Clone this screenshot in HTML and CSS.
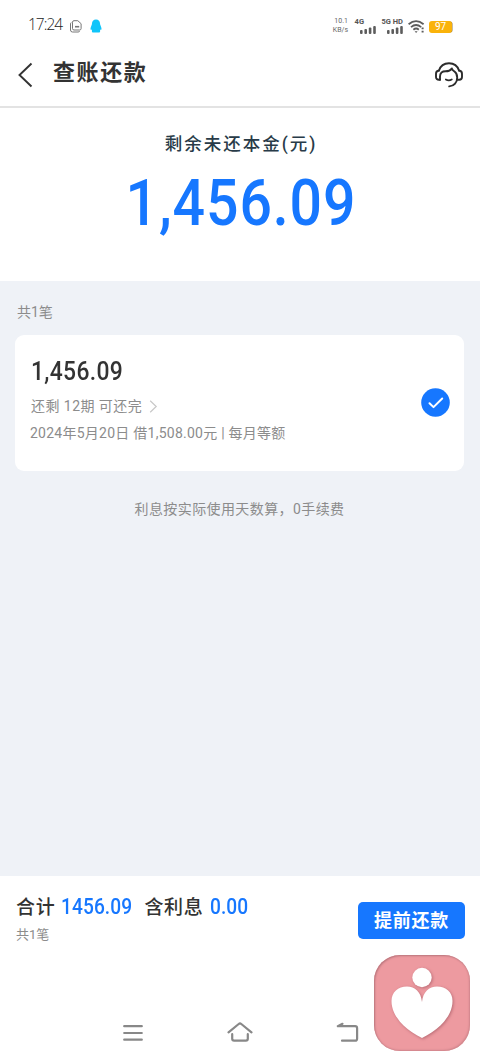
FILE: index.html
```html
<!DOCTYPE html>
<html lang="zh-CN">
<head>
<meta charset="utf-8">
<title>查账还款</title>
<link rel="stylesheet" href="styles.css">
</head>
<body>
<div class="screen">
  <div class="status">
    <span class="clock">17:24</span>
    <svg class="note-icon" width="12" height="13" viewBox="0 0 12 13" fill="none" stroke="#777" stroke-width="1"><path d="M4 .7h3.800l3.300 3v4.800q0 1.500-1.500 1.500H4q-1.500 0-1.500-1.500V2.200Q2.500.7 4 .7z"/><path d="M1.200 2.500Q.5 3 .5 4v6q0 2 2 2h5.500q1.300 0 1.800-.9"/><path d="M5 6.700h4.200" stroke-width="1.600"/></svg>
    <svg class="qq-icon" width="12" height="14" viewBox="0 0 12 14" fill="#10c5fa"><path d="M6 .4C3.400.4 2 2.200 2 4.500 2 6.200.5 8 .5 9.700c0 1.300.7 1.300 1.400.9v2q0 .9 1 .9h6.200q1 0 1-.9v-2c.7.4 1.400.4 1.400-.9C11.500 8 10 6.200 10 4.500 10 2.200 8.600.4 6 .4z"/></svg>
    <div class="status-right">
      <div class="speed"><span>10.1</span><span>KB/s</span></div>
      <div class="network net-4g"><b>4G</b><svg width="16" height="8" viewBox="0 0 16 8" fill="#5d5d5d"><rect y="4" width="2.600" height="4" rx="1"/><rect x="4.400" y="3" width="2.600" height="5" rx="1"/><rect x="8.800" y="1.500" width="2.600" height="6.500" rx="1"/><rect x="13.200" width="2.600" height="8" rx="1"/></svg></div>
      <div class="network net-5g"><b>5G HD</b><svg width="16" height="8" viewBox="0 0 16 8" fill="#5d5d5d"><rect y="4" width="2.600" height="4" rx="1"/><rect x="4.400" y="3" width="2.600" height="5" rx="1"/><rect x="8.800" y="1.500" width="2.600" height="6.500" rx="1"/><rect x="13.200" width="2.600" height="8" rx="1"/></svg></div>
      <svg class="wifi" width="17" height="13" viewBox="0 0 17 13" fill="none" stroke="#5d5d5d" stroke-width="1.800"><path d="M.6 4.300Q8 -2 15.600 4.300M3 7.100q5-4.200 10.200 0M5.400 9.700q2.700-2.300 5.400 0"/><path d="M6.600 11.300h3L8.100 13z" fill="#5d5d5d" stroke="none"/><path d="M14.600 7.500v1.800M14.600 10.700v1.800" stroke-width="2"/></svg>
      <div class="battery">97</div>
    </div>
  </div>

  <header class="header">
    <svg class="back" width="16" height="26" viewBox="0 0 16 26" fill="none" stroke="#333" stroke-width="1.900"><path d="M13.500 1.500 1.500 13l12 11.500"/></svg>
    <h1 class="title">查账还款</h1>
    <svg class="service" width="28" height="26" viewBox="0 0 28 26" fill="none" stroke="#2c2c2c" stroke-width="1.900" stroke-linecap="round" stroke-linejoin="round"><path d="M4 8.500C5.400 4 9 1.200 14 1.200S22.600 4 24 8.500"/><path d="M5 17.700H3.800C2.200 17.700 1 16.600 1 15v-3.200c0-1.800 1.300-3.100 3-3.300"/><path d="M5 17.700v-3.200c0-3.600 2.200-5.200 5.600-5.200 3 0 5-.9 6.200-2.900.4 1.500 1.500 2.300 2.700 3.200 1.800 1.300 2.700 3 2.700 5.800 0 5-3 8.900-8 9"/><path d="M24 8.500c1.700.2 3 1.500 3 3.300V15c0 1.600-1.200 2.700-2.800 2.700h-2"/><path d="M10.800 17.500q2.900 1.700 6 0" stroke-width="1.700"/></svg>
  </header>

  <section class="summary">
    <div class="summary-label">剩余未还本金(元)</div>
    <div class="summary-amount">1,456.09</div>
  </section>

  <main class="content">
    <div class="count">共1笔</div>
    <div class="card">
      <div class="loan">
        <div class="loan-amount">1,456.09</div>
        <div class="loan-terms"><span>还剩 12期 可还完</span><svg width="9" height="13" viewBox="0 0 9 13" fill="none" stroke="#c8c8c8" stroke-width="1.200"><path d="m1.200.8 6 5.700-6 5.700"/></svg></div>
        <div class="loan-detail">2024年5月20日 借1,508.00元 | 每月等额</div>
      </div>
      <svg class="check" width="29" height="29" viewBox="0 0 29 29"><circle cx="14.500" cy="14.500" r="14.300" fill="#1677ff"/><path d="m8.500 15.300 4 3.800 8.700-8.600" fill="none" stroke="#fff" stroke-width="2" stroke-linecap="round" stroke-linejoin="round"/></svg>
    </div>
    <p class="hint">利息按实际使用天数算，0手续费</p>
  </main>

  <footer class="footer">
    <div class="totals">
      <div class="total-line"><span class="total-name">合计</span><span class="total-num sum">1456.09</span><span class="total-name interest">含利息</span><span class="total-num">0.00</span></div>
      <div class="total-count">共1笔</div>
    </div>
    <button class="pay">提前还款</button>
  </footer>

  <nav class="nav">
    <svg width="20" height="18" viewBox="0 0 20 18" fill="none" stroke="#888" stroke-width="2.200" stroke-linecap="round"><path d="M1.200 2.200h17.600M1.200 9h17.600M1.200 15.700h17.600"/></svg>
    <svg class="home" width="26" height="20" viewBox="0 0 26 20" fill="none" stroke="#888" stroke-width="2.200" stroke-linecap="round" stroke-linejoin="round"><path d="M1.500 10.300 11.700 2q1.300-1 2.600 0l10.200 8.300"/><path d="M5.200 12.200v4.600q0 1.900 1.900 1.900h11.800q1.900 0 1.900-1.900v-4.600"/></svg>
    <svg class="return" width="23" height="20" viewBox="0 0 23 20" fill="none" stroke="#888" stroke-width="2.200" stroke-linecap="round" stroke-linejoin="round"><path d="M6.500 1.800 1.800 4.200h17.300q2 0 2 2v10.500q0 2-2 2H6"/></svg>
  </nav>

  <div class="floating">
    <svg width="96" height="96" viewBox="0 0 96 96"><g fill="#fff"><circle cx="48" cy="22.500" r="9.700"/><path d="M48 47C47 37 41 31.500 33 31.500 24 31.500 17.500 37 17.500 46c0 15 13.500 29 30.500 37C65 75 78.500 61 78.500 46c0-9-6.500-14.500-15.500-14.500C55 31.500 49 37 48 47z"/></g></svg>
  </div>
</div>
</body>
</html>
```
FILE: styles.css
```css
* { box-sizing: border-box; }
body { margin: 0; }
svg { display: block; flex: none; }
.screen {
  position: relative;
  display: flex;
  flex-direction: column;
  width: 480px;
  height: 1061px;
  overflow: hidden;
  background: #fff;
  color: #333;
  font-family: Roboto, "Noto Sans CJK SC", sans-serif;
  white-space: nowrap;
}
.status {
  display: flex;
  align-items: flex-start;
  height: 50px;
  padding: 15px 26px 0 28px;
}
.clock {
  width: 42px;
  font: 300 15.500px/18px "Open Sans", sans-serif;
  letter-spacing: -1px;
  color: #222;
}
.note-icon { margin-top: 5px; }
.qq-icon { margin: 4px 0 0 8px; }
.status-right { display: flex; margin-left: auto; }
.speed {
  display: flex;
  flex-direction: column;
  align-items: flex-end;
  width: 20px;
  padding-top: 2px;
  font-size: 7px;
  line-height: 9px;
  color: #666;
}
.network {
  display: flex;
  flex-direction: column;
  align-items: flex-end;
  gap: 1px;
  padding-top: 3px;
  color: #555;
}
.network b { font-size: 7.500px; line-height: 7px; }
.net-4g { width: 28px; }
.net-4g b { margin-right: 12px; }
.net-5g { width: 27px; }
.wifi { margin: 5px 0 0 5px; }
.battery {
  width: 23px;
  height: 12px;
  margin: 6px 2px 0 4px;
  border-radius: 3px;
  background: #fab30b;
  box-shadow: 1px 0 0 -0.500px #8a7650;
  color: #fff;
  font-size: 10px;
  line-height: 12px;
  text-align: center;
}
.header {
  display: flex;
  align-items: center;
  height: 58px;
  padding: 0 17px 8px 18px;
  border-bottom: 2px solid #e3e3e3;
}
.back { margin-top: 2px; }
.title {
  margin: -3px 0 0 19px;
  font-size: 22px;
  font-weight: 700;
  line-height: 30px;
  letter-spacing: 1.600px;
}
.service { margin: 2px 0 0 auto; }
.summary {
  display: flex;
  flex-direction: column;
  align-items: center;
  height: 173px;
  padding-top: 24px;
}
.summary-label {
  margin-left: 2px;
  font-size: 17.500px;
  font-weight: 500;
  line-height: 24px;
  letter-spacing: 2px;
  color: #283b48;
}
.summary-amount {
  margin-top: 15px;
  padding-left: 3px;
  font-size: 65px;
  font-weight: 500;
  line-height: 65px;
  letter-spacing: 1px;
  color: #1677ff;
  transform: scaleX(.88);
}
.content {
  flex: 1;
  padding: 20px 16px 0 15px;
  background: #eff2f7;
}
.count {
  height: 34px;
  padding-left: 2px;
  font-size: 14px;
  line-height: 22px;
  color: #8c8c8c;
}
.card {
  display: flex;
  justify-content: space-between;
  height: 136px;
  padding: 21px 14px 0 15px;
  border-radius: 9px;
  background: #fff;
}
.loan-amount {
  padding-left: 1px;
  font-size: 26px;
  font-weight: 500;
  line-height: 31px;
  letter-spacing: .4px;
  transform: scaleX(.88);
  transform-origin: left;
}
.loan-terms {
  display: flex;
  align-items: center;
  gap: 7px;
  margin-top: 6px;
  padding-left: 1px;
  font-size: 14px;
  line-height: 26px;
  letter-spacing: .45px;
  color: #8c8c8c;
}
.loan-detail {
  font-size: 14px;
  line-height: 28px;
  letter-spacing: .25px;
  color: #8c8c8c;
}
.check { margin-top: 32px; }
.hint {
  margin: 26px 0 0;
  font-size: 14px;
  line-height: 24px;
  letter-spacing: .4px;
  text-align: center;
  color: #8c8c8c;
}
.footer {
  display: flex;
  justify-content: space-between;
  height: 79px;
  padding: 16px 15px 0 16px;
}
.total-line {
  display: flex;
  align-items: baseline;
  height: 31px;
  line-height: 30px;
}
.total-name {
  font-size: 19px;
  font-weight: 500;
  letter-spacing: .7px;
}
.total-num {
  display: inline-block;
  margin-left: 6px;
  font-size: 22px;
  font-weight: 500;
  letter-spacing: .1px;
  color: #1677ff;
  transform: scaleX(.87);
  transform-origin: left;
}
.sum { width: 71px; }
.interest { margin-left: 12px; }
.total-count {
  font-size: 13px;
  line-height: 24px;
  color: #8c8c8c;
}
.pay {
  width: 107px;
  height: 37px;
  margin-top: 10px;
  padding: 0 0 3px;
  border: 0;
  border-radius: 5px;
  background: #1677ff;
  color: #fff;
  font-family: inherit;
  font-size: 18px;
  font-weight: 700;
  letter-spacing: .8px;
}
.nav {
  display: flex;
  align-items: center;
  justify-content: space-between;
  height: 106px;
  padding: 49px 121px 0 123px;
}
.home, .return { margin-bottom: 2px; }
.floating {
  position: absolute;
  left: 374px;
  top: 955px;
  width: 96px;
  height: 96px;
  border-radius: 26px;
  background: #ed9aa0;
  box-shadow: inset 1px 1px 2px #b8757c, inset -1px -1px 2px #d0878d;
}
.floating g { filter: drop-shadow(1px 1px 1.500px #b96c75); }
```
